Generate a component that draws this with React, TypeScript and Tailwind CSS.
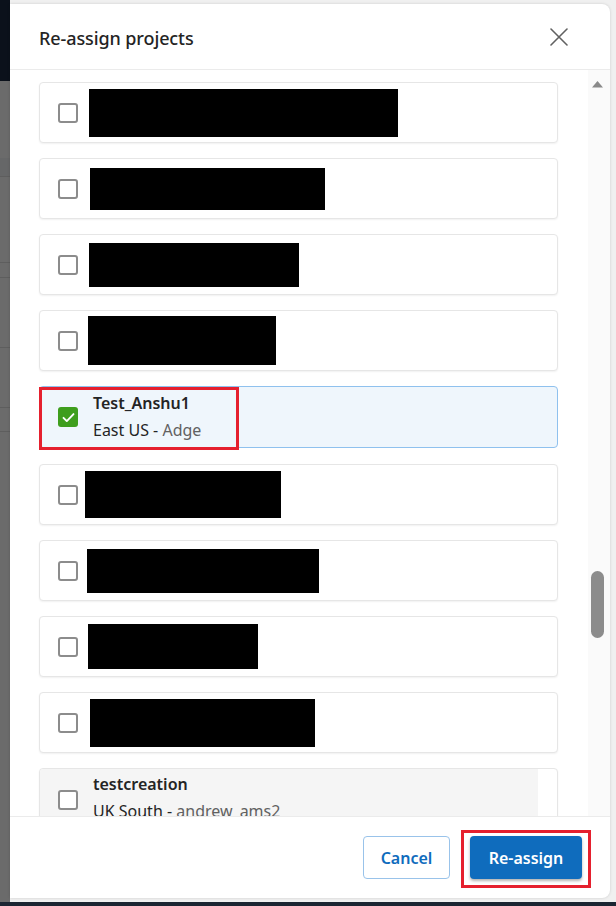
import { useState } from 'react'

type Row = {
    id: number
    redact?: { w: number; h: number; x: number }
    title?: string
    region?: string
    owner?: string
}

const rows: Row[] = [
    { id: 1, redact: { w: 309, h: 48, x: -4 } },
    { id: 2, redact: { w: 235, h: 42, x: -3 } },
    { id: 3, redact: { w: 210, h: 44, x: -4 } },
    { id: 4, redact: { w: 188, h: 49, x: -5 } },
    { id: 5, title: 'Test_Anshu1', region: 'East US', owner: 'Adge' },
    { id: 6, redact: { w: 196, h: 47, x: -8 } },
    { id: 7, redact: { w: 232, h: 44, x: -6 } },
    { id: 8, redact: { w: 170, h: 45, x: -5 } },
    { id: 9, redact: { w: 225, h: 48, x: -3 } },
    { id: 10, title: 'testcreation', region: 'UK South', owner: 'andrew_ams2' },
]

function Checkbox({ checked }: { checked: boolean }) {
    if (checked) {
        return (
            <div className="w-[20px] h-[20px] shrink-0 rounded-[3px] bg-[#3e9e1d] flex items-center justify-center">
                <svg width="15" height="15" viewBox="0 0 15 15" fill="none">
                    <path d="M2.5 7.8l3.3 3.3 6.7-7" stroke="white" strokeWidth="1.9" strokeLinecap="round" strokeLinejoin="round" />
                </svg>
            </div>
        )
    }
    return <div className="w-[20px] h-[20px] shrink-0 rounded-[3px] border-2 border-[#8c8c8c] bg-white" />
}

function ProjectText({ row }: { row: Row }) {
    return (
        <div className="ml-[15px] flex flex-col justify-center text-[16px] leading-[27px]">
            <span className="font-semibold text-[#242424]">{row.title}</span>
            <span className="text-[#242424] whitespace-nowrap">
                {row.region} - <span className="text-[#616161]">{row.owner}</span>
            </span>
        </div>
    )
}

function ProjectCard({ row, checked }: { row: Row; checked: boolean }) {
    const hover = row.id === 10
    return (
        <div
            className={
                checked
                    ? 'relative h-[62px] mb-[1px] shrink-0 rounded-[4px] border border-[#8fc1ee] bg-[#eff6fc] flex items-center pl-[18px]'
                    : 'relative h-[61px] shrink-0 rounded-[4px] border border-[#e6e6e6] bg-white shadow-[0_1px_2px_rgba(0,0,0,0.06)] flex items-center'
            }
        >
            {hover ? (
                <div className="h-full w-[498px] bg-[#f5f5f5] rounded-l-[4px] flex items-start pl-[18px] pt-[2px]">
                    <div className="pt-[19px]">
                        <Checkbox checked={false} />
                    </div>
                    <ProjectText row={row} />
                </div>
            ) : (
                <div className={checked ? 'flex items-center' : 'flex items-center pl-[18px]'}>
                    <Checkbox checked={checked} />
                    {row.redact ? (
                        <div
                            className="bg-black"
                            style={{ width: row.redact.w, height: row.redact.h, marginLeft: 15 + row.redact.x }}
                        />
                    ) : (
                        <ProjectText row={row} />
                    )}
                </div>
            )}
            {checked && (
                <div className="absolute -left-px top-0 w-[200px] h-[63px] border-[3px] border-[#e5202e]" />
            )}
        </div>
    )
}

export default function App() {
    const [selected] = useState<number>(5)

    return (
        <div
            className="w-[616px] h-[906px] bg-[#f0f0f0] flex flex-col overflow-hidden"
            style={{ fontFamily: '"Noto Sans", "Open Sans", sans-serif' }}
        >
            <div className="flex h-[902px]">
                {/* page behind the overlay */}
                <div className="w-[10px] flex flex-col shrink-0">
                    <div className="h-[81px] bg-[#0b111b]" />
                    <div className="flex-1 bg-[#6b6b6b] flex flex-col">
                        <div className="h-[77px]" />
                        <div className="h-[19px] bg-[#666768] border-b border-[#5e5e5e]" />
                        <div className="h-[86px] border-b border-[#5e5e5e]" />
                        <div className="h-[15px] border-b border-[#5e5e5e]" />
                        <div className="h-[70px] border-b border-[#5e5e5e]" />
                        <div className="h-[60px] border-b border-[#5e5e5e]" />
                        <div className="h-[24px] border-b border-[#5e5e5e]" />
                    </div>
                </div>

                {/* dialog */}
                <div className="w-[600px] pt-[4px] pb-[4px]">
                    <div className="h-full bg-white rounded-r-[8px] shadow-[0_0_3px_rgba(0,0,0,0.15)] flex flex-col overflow-hidden">
                        <div className="h-[66px] shrink-0 border-b border-[#ebebeb] flex items-center justify-between pl-[29px] pr-[42px]">
                            <h2 className="text-[18px] font-medium text-[#242424] tracking-[-0.1px] pt-[3px]">Re-assign projects</h2>
                            <svg width="18" height="18" viewBox="0 0 18 18" fill="none">
                                <path d="M1 1l16 16M17 1L1 17" stroke="#616161" strokeWidth="1.6" strokeLinecap="round" />
                            </svg>
                        </div>

                        <div className="flex-1 flex min-h-0">
                            <div className="flex-1 overflow-hidden pl-[29px] pr-[30px] pt-[12px] flex flex-col gap-[15px]">
                                {rows.map((r) => (
                                    <ProjectCard key={r.id} row={r} checked={r.id === selected} />
                                ))}
                            </div>
                            <div className="w-[22px] shrink-0 bg-[#fafafa] flex flex-col items-center pt-[11px] pr-[3px]">
                                <svg width="11" height="7" viewBox="0 0 11 7">
                                    <path d="M5.5 0L11 6.5H0z" fill="#8a8a8a" />
                                </svg>
                                <div className="h-[483px]" />
                                <div className="w-[13px] h-[67px] rounded-full bg-[#8c8c8c]" />
                            </div>
                        </div>

                        <div className="h-[82px] shrink-0 border-t border-[#ebebeb] flex items-start justify-end gap-[20px] pt-[19px] pr-[28px]">
                            <button className="h-[43px] w-[87px] rounded-[4px] border border-[#99c3ea] bg-white text-[#0f6cbd] text-[16px] font-semibold">
                                Cancel
                            </button>
                            <div className="relative">
                                <button className="h-[43px] w-[112px] rounded-[4px] bg-[#0f6cbd] text-white text-[16px] font-semibold shadow-[0_2px_3px_rgba(0,0,0,0.3)]">
                                    Re-assign
                                </button>
                                <div className="absolute -left-[9px] -top-[6px] w-[130px] h-[58px] border-[3px] border-[#e5202e]" />
                            </div>
                        </div>
                    </div>
                </div>
            </div>
            <div className="flex-1 bg-[#1b2532]" />
        </div>
    )
}
